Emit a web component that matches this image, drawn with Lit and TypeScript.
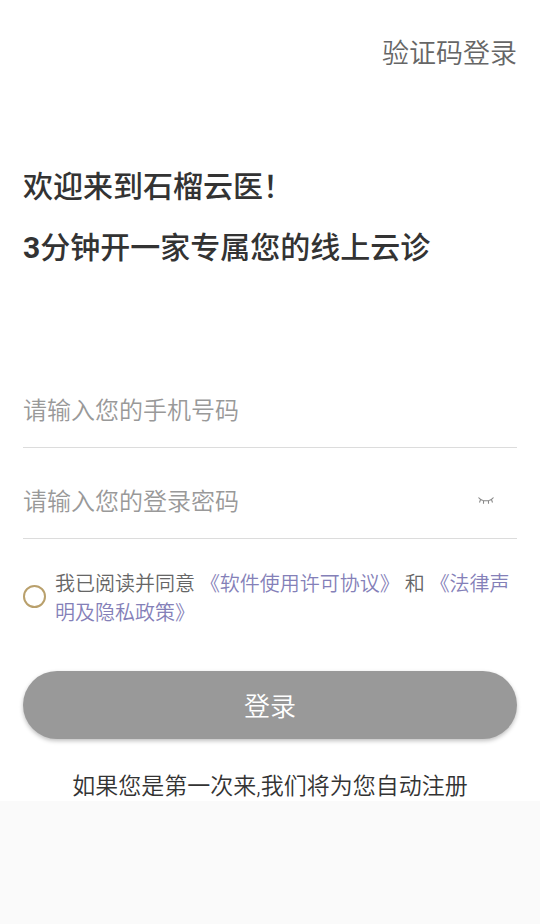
import { LitElement, html, css } from "lit";
import { customElement, state } from "lit/decorators.js";

@customElement("app-root")
export class AppRoot extends LitElement {
  @state() private revealed = false;

  static styles = css`
    :host {
      display: block;
      min-height: 100vh;
      background: #fafafa;
      color: #333;
      font-family: Roboto, "Noto Sans CJK SC", sans-serif;
      font-weight: 350;
    }
    * {
      box-sizing: border-box;
    }
    button,
    input {
      font: inherit;
      border: 0;
      padding: 0;
      margin: 0;
      background: none;
      color: inherit;
    }
    button {
      cursor: pointer;
    }
    .page {
      display: flex;
      flex-direction: column;
      padding: 34px 23px 0;
      background: #fff;
    }
    .switch {
      align-self: flex-end;
      font-size: 27px;
      line-height: 40px;
      color: #666;
    }
    .title {
      margin: 82px 0 96px;
      font-size: 30px;
      line-height: 61px;
      font-weight: 500;
    }
    .line {
      display: block;
    }
    .figure {
      font-weight: 700;
    }
    .field {
      display: flex;
      align-items: center;
      margin-bottom: 17px;
      border-bottom: 1px solid #dcdcdc;
    }
    .input {
      flex: 1;
      min-width: 0;
      height: 73px;
      font-size: 24px;
      outline: none;
    }
    .input::placeholder {
      color: #999;
      opacity: 1;
    }
    .eye {
      display: flex;
      padding: 16px 22px 18px;
    }
    .terms {
      display: flex;
      align-items: flex-start;
      gap: 9px;
      margin: 14px 0 43px;
      font-size: 20px;
      line-height: 29px;
      color: #666;
    }
    .check {
      flex: none;
      appearance: none;
      width: 23px;
      height: 23px;
      margin: 15px 0 0;
      border: 2px solid #b9a06c;
      border-radius: 50%;
    }
    .check:checked {
      background: #b9a06c;
    }
    .link {
      color: #8480b8;
      text-decoration: none;
    }
    .submit {
      height: 68px;
      padding-bottom: 2px;
      border-radius: 34px;
      background: #999;
      color: #fff;
      font-size: 26px;
      box-shadow: 0 2px 4px rgba(0, 0, 0, 0.25);
    }
    .hint {
      margin: 34px 0 0;
      font-size: 23px;
      line-height: 28px;
      text-align: center;
    }
  `;

  render() {
    return html`
      <main class="page">
        <button class="switch" type="button">验证码登录</button>
        <h1 class="title">
          <span class="line">欢迎来到石榴云医！</span>
          <span class="line"><span class="figure">3</span>分钟开一家专属您的线上云诊</span>
        </h1>
        <div class="field">
          <input class="input" type="tel" aria-label="手机号码" placeholder="请输入您的手机号码" />
        </div>
        <div class="field">
          <input
            class="input"
            type=${this.revealed ? "text" : "password"}
            aria-label="登录密码"
            placeholder="请输入您的登录密码"
          />
          <button
            class="eye"
            type="button"
            aria-label="显示密码"
            aria-pressed=${this.revealed}
            @click=${() => (this.revealed = !this.revealed)}
          >
            <svg width="18" height="10" viewBox="0 0 18 10" fill="none" stroke="#888" stroke-width="1.1">
              <path d="M1.500 1.500Q4 4.800 9 4.800T16.500 1.500M3.500 3.600L2.500 6.500M6.500 4.800V7.800M11.500 4.800V7.800M14.500 3.600L15.500 6.500" />
            </svg>
          </button>
        </div>
        <div class="terms">
          <input class="check" id="agree" type="checkbox" />
          <label for="agree"
            >我已阅读并同意 <a class="link" href="#license">《软件使用许可协议》</a> 和
            <a class="link" href="#privacy">《法律声明及隐私政策》</a></label
          >
        </div>
        <button class="submit" type="button">登录</button>
        <p class="hint">如果您是第一次来,我们将为您自动注册</p>
      </main>
    `;
  }
}
